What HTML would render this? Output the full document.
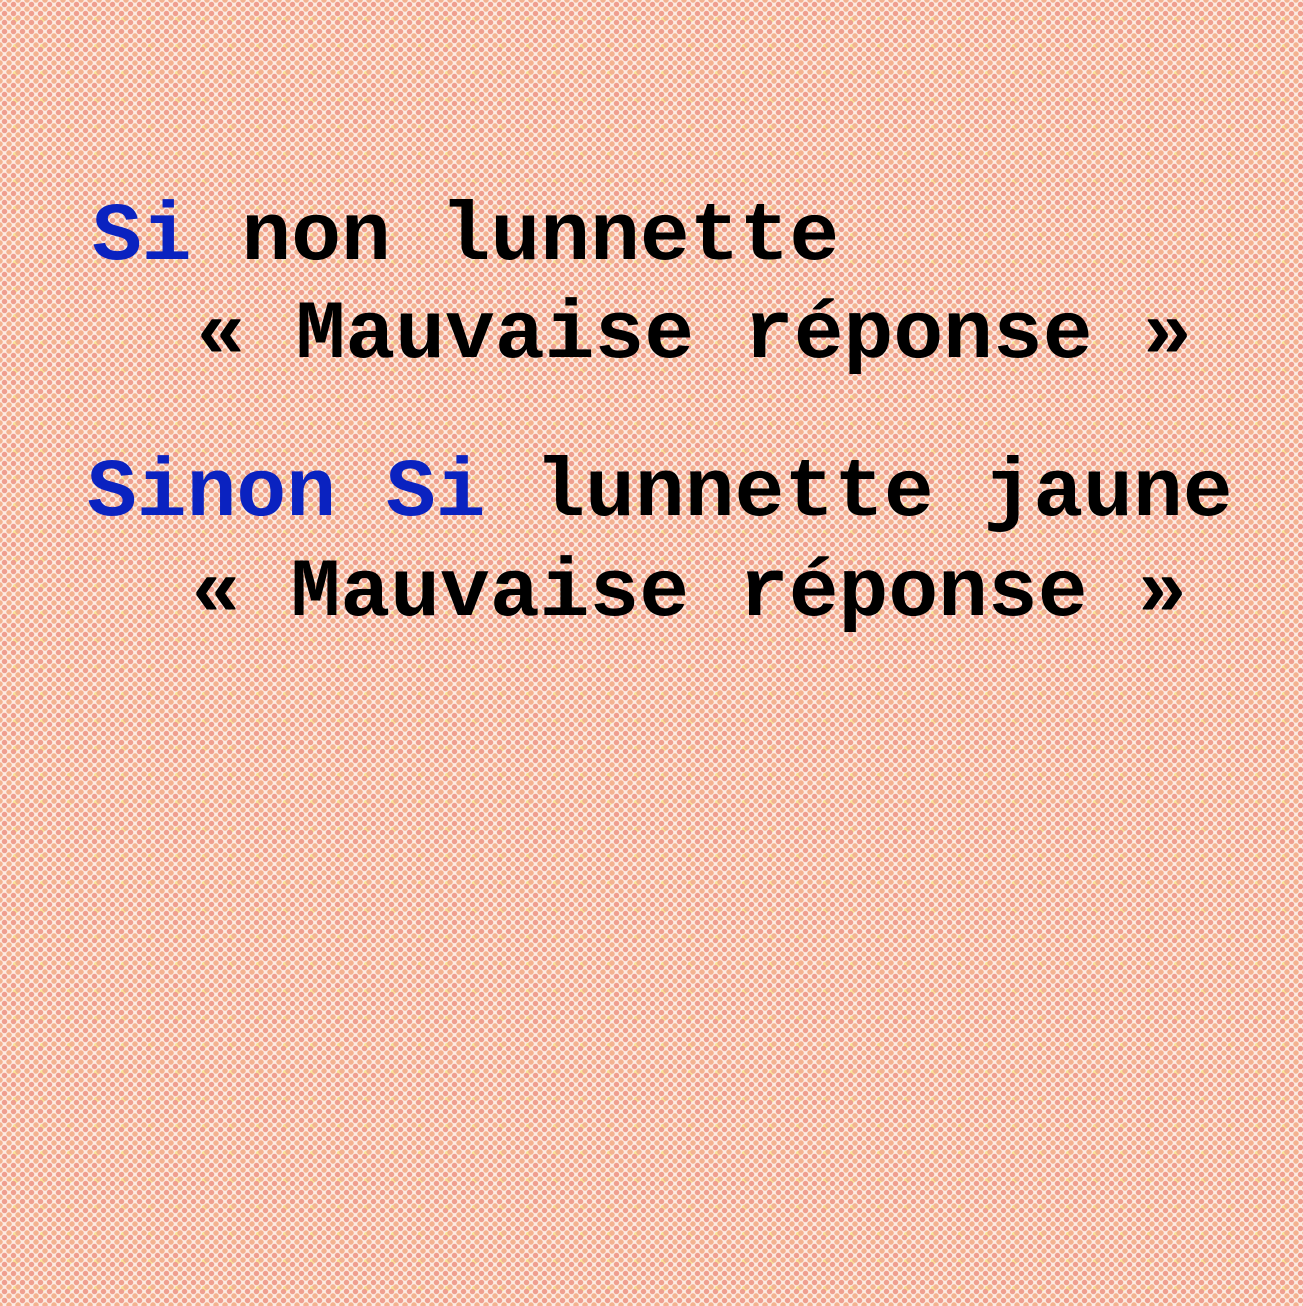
<!DOCTYPE html>
<html><head><meta charset="utf-8"><style>
html,body{margin:0;padding:0}
body{width:1303px;height:1306px;overflow:hidden;position:relative;
background-color:#fcebe2;
background-image:
radial-gradient(circle,#ef9f8f 2.4px,transparent 3px),
radial-gradient(circle,#f3b290 2.4px,transparent 3px),
radial-gradient(circle,#f7e79a 2.4px,transparent 3px);
background-size:9px 9px,9px 9px,27px 27px;
background-position:0 0,4.5px 4.5px,2px 6px;
font-family:"Liberation Mono",monospace;font-weight:bold;font-size:83px;color:#000}
.l{position:absolute;white-space:pre;line-height:1}
.b{color:#0a22c0}
</style></head><body>
<div class="l" style="left:92px;top:196px"><span class="b">Si</span> non lunnette</div>
<div class="l" style="left:196px;top:294px">« Mauvaise réponse »</div>
<div class="l" style="left:87px;top:452px"><span class="b">Sinon Si</span> lunnette jaune</div>
<div class="l" style="left:191px;top:552px">« Mauvaise réponse »</div>
</body></html>
